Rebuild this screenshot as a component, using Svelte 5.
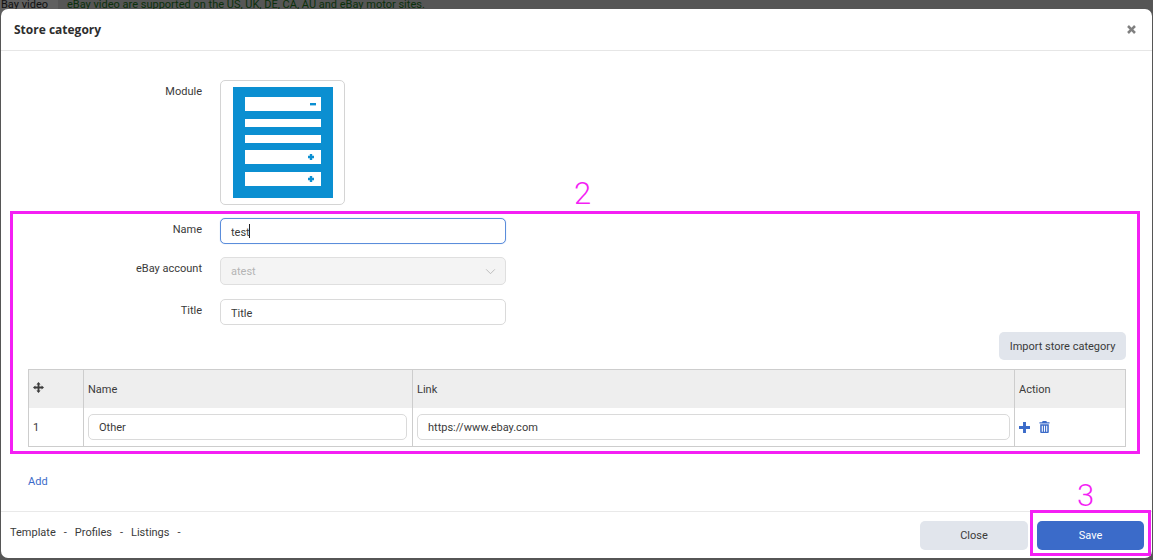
<script>
  let name = 'test';
  let title = 'Title';
  let rows = [{ id: 1, name: 'Other', link: 'https://www.ebay.com' }];
  const footerLinks = ['Template', 'Profiles', 'Listings'];
</script>

<div class="backdrop">
  <div class="behind">
    <span class="behind-label">Bay video</span>
    <span class="behind-text">eBay video are supported on the US, UK, DE, CA, AU and eBay motor sites.</span>
  </div>

  <div class="modal">
    <header>
      <h4>Store category</h4>
      <svg class="close-x" viewBox="0 0 12 12" width="11" height="11" aria-hidden="true">
        <path d="M1.2 3.2 3.2 1.2 6 4 8.800 1.200 10.800 3.200 8 6 10.800 8.800 8.800 10.800 6 8 3.200 10.800 1.200 8.800 4 6Z" fill="#808080" />
      </svg>
    </header>

    <div class="body">
      <div class="row module-row">
        <span class="label">Module</span>
        <div class="module-box">
          <svg viewBox="0 0 100 111" width="100" height="111" aria-hidden="true">
            <rect width="100" height="111" fill="#0b8fd1" />
            <g fill="#fff">
              <rect x="12" y="10" width="76" height="14" />
              <rect x="12" y="32" width="76" height="8" />
              <rect x="12" y="48" width="76" height="8" />
              <rect x="12" y="63" width="76" height="14" />
              <rect x="12" y="85" width="76" height="14" />
            </g>
            <g fill="#0b8fd1">
              <rect x="77" y="16" width="6" height="2.400" />
              <path d="M75 70h6M78 67v6M75 92h6M78 89v6" stroke="#0b8fd1" stroke-width="2.400" />
            </g>
          </svg>
        </div>
      </div>

      <div class="row name-row">
        <span class="label">Name</span>
        <div class="field">
          <input class="input focused" bind:value={name} />
          <span class="caret"></span>
        </div>
      </div>

      <div class="row account-row">
        <span class="label">eBay account</span>
        <div class="select">
          <span>atest</span>
          <svg viewBox="0 0 12 8" width="11" height="7" aria-hidden="true">
            <path d="M1 1.500 6 6.500 11 1.500" fill="none" stroke="#b5b5b5" stroke-width="1" />
          </svg>
        </div>
      </div>

      <div class="row title-row">
        <span class="label">Title</span>
        <input class="input" bind:value={title} />
      </div>

      <div class="import-row">
        <button class="btn import">Import store category</button>
      </div>

      <table>
        <thead>
          <tr>
            <th class="col-move">
              <svg viewBox="0 0 12 12" width="11" height="11" aria-hidden="true">
                <path d="M6 0 8.300 2.600H7V5H9.400V3.700L12 6 9.400 8.300V7H7V9.400H8.300L6 12 3.700 9.400H5V7H2.600V8.300L0 6 2.600 3.700V5H5V2.600H3.700Z" fill="#3c3c3c" />
              </svg>
            </th>
            <th class="col-name">Name</th>
            <th class="col-link">Link</th>
            <th>Action</th>
          </tr>
        </thead>
        <tbody>
          {#each rows as row}
            <tr>
              <td>{row.id}</td>
              <td><input class="input cell" bind:value={row.name} /></td>
              <td class="link-cell"><input class="input cell" bind:value={row.link} /></td>
              <td>
                <div class="actions">
                  <svg viewBox="0 0 12 12" width="11" height="11" aria-hidden="true">
                    <path d="M4.400 0H7.600V4.400H12V7.600H7.600V12H4.400V7.600H0V4.400H4.400Z" fill="#3b6bc9" />
                  </svg>
                  <svg viewBox="0 0 12 13" width="11" height="12" aria-hidden="true">
                    <path fill-rule="evenodd" d="M4 0H8L8.700 1.300H11.500V2.800H.5V1.300H3.300ZM1.300 3.600H10.700V12A1 1 0 0 1 9.700 13H2.300A1 1 0 0 1 1.300 12ZM3 5V11.600H4.200V5ZM5.400 5V11.600H6.600V5ZM7.800 5V11.600H9V5Z" fill="#3b6bc9" />
                  </svg>
                </div>
              </td>
            </tr>
          {/each}
        </tbody>
      </table>

      <a class="add" href="#add">Add</a>
    </div>

    <footer>
      <div class="links">
        {#each footerLinks as link}
          <span>{link}</span><span>-</span>
        {/each}
      </div>
      <div class="buttons">
        <button class="btn close">Close</button>
        <button class="btn save">Save</button>
      </div>
    </footer>

    <!-- annotation marks drawn over the screenshot -->
    <div class="mark mark-2"></div>
    <div class="mark mark-3"></div>
    <span class="mark-num num-2">2</span>
    <span class="mark-num num-3">3</span>
  </div>
</div>

<style>
  :global(body) {
    margin: 0;
    background: #565656;
    overflow: hidden;
  }
  .backdrop {
    position: relative;
    height: 560px;
    padding: 9px 1px 2px;
    box-sizing: border-box;
    font-family: Roboto, "Noto Sans", sans-serif;
    font-size: 11px;
    color: #3a3a3a;
  }
  .behind {
    position: absolute;
    top: -3px;
    left: 0;
    display: flex;
    font-size: 11px;
    line-height: 16px;
  }
  .behind-label {
    width: 58px;
    padding-left: 1px;
    box-sizing: border-box;
    background: #606060;
    color: #111;
  }
  .behind-text {
    margin-left: 9px;
    color: #0c300c;
  }
  .modal {
    position: relative;
    display: flex;
    flex-direction: column;
    height: 549px;
    background: #fff;
    border-radius: 7px;
  }
  header {
    display: flex;
    align-items: center;
    justify-content: space-between;
    height: 41px;
    padding: 0 15px 0 13px;
    border-bottom: 1px solid #e6e6e6;
  }
  h4 {
    margin: 0;
    font-family: "Open Sans", sans-serif;
    font-size: 12px;
    font-weight: 700;
    color: #2e2e2e;
  }
  .body {
    flex: 1;
    padding: 29px 26px 0 27px;
  }
  .row {
    display: flex;
    margin-left: -27px;
  }
  .label {
    width: 201px;
    margin-right: 18px;
    padding-top: 4px;
    text-align: right;
    line-height: 16px;
    box-sizing: border-box;
  }
  .module-box {
    display: flex;
    align-items: center;
    justify-content: center;
    width: 125px;
    height: 125px;
    border: 1px solid #d4d4d4;
    border-radius: 5px;
    box-sizing: border-box;
  }
  .name-row { margin-top: 13px; }
  .account-row { margin-top: 13px; }
  .title-row { margin-top: 14px; }
  .field { position: relative; }
  .input {
    display: block;
    width: 286px;
    height: 26px;
    padding: 3px 10px 1px;
    border: 1px solid #dadada;
    border-radius: 5px;
    box-sizing: border-box;
    font: inherit;
    color: #3a3a3a;
    outline: none;
    background: #fff;
  }
  .focused {
    border-color: #5b8ddb;
    box-shadow: 0 0 1px #9dbcec;
  }
  .caret {
    position: absolute;
    top: 6px;
    left: 29px;
    width: 1px;
    height: 14px;
    background: #222;
  }
  .select {
    display: flex;
    align-items: center;
    justify-content: space-between;
    width: 286px;
    height: 28px;
    padding: 1px 9px 0 10px;
    border: 1px solid #dfdfdf;
    border-radius: 5px;
    box-sizing: border-box;
    background: #f4f4f4;
    color: #b4b4b4;
  }
  .import-row {
    display: flex;
    justify-content: flex-end;
    margin-top: 7px;
  }
  .btn {
    border: 0;
    border-radius: 5px;
    font: inherit;
    color: #3a3a3a;
    background: #e1e5ec;
  }
  .import {
    width: 127px;
    height: 28px;
    padding: 0;
  }
  table {
    width: 1098px;
    margin-top: 9px;
    border-collapse: collapse;
    table-layout: fixed;
    border: 1px solid #cdcdcd;
  }
  th, td {
    padding: 0 4px;
    border-left: 1px solid #cdcdcd;
    text-align: left;
    font-weight: 400;
  }
  th {
    height: 38px;
    background: #eeeeee;
  }
  td {
    height: 38px;
    padding: 0 5px 0 4px;
  }
  td.link-cell { padding-right: 4px; }
  .col-move { width: 46px; }
  .col-name { width: 320px; }
  .col-link { width: 593px; }
  .cell {
    width: 100%;
    padding: 2px 10px;
  }
  .actions {
    display: flex;
    align-items: center;
    gap: 9px;
  }
  .add {
    display: block;
    width: max-content;
    margin-top: 27px;
    color: #3b6bc9;
    text-decoration: none;
    line-height: 16px;
  }
  footer {
    display: flex;
    align-items: center;
    justify-content: space-between;
    height: 46px;
    padding: 0 8px 0 9px;
    border-top: 1px solid #e9e9e9;
  }
  .links {
    display: flex;
    gap: 8px;
    margin-top: -5px;
  }
  .buttons {
    display: flex;
    gap: 9px;
  }
  .close, .save {
    height: 29px;
  }
  .close { width: 108px; }
  .save {
    width: 107px;
    background: #3b6bc9;
    color: #fff;
  }
  .mark {
    position: absolute;
    border: 3px solid #f41ff4;
    box-sizing: border-box;
    pointer-events: none;
  }
  .mark-2 {
    top: 202px;
    left: 9px;
    width: 1130px;
    height: 243px;
  }
  .mark-3 {
    top: 501px;
    left: 1029px;
    width: 121px;
    height: 46px;
  }
  .mark-num {
    position: absolute;
    color: #f41ff4;
    font-size: 31px;
    line-height: 36px;
    font-weight: 300;
  }
  .num-2 { top: 167px; left: 573px; }
  .num-3 { top: 469px; left: 1076px; }
</style>
